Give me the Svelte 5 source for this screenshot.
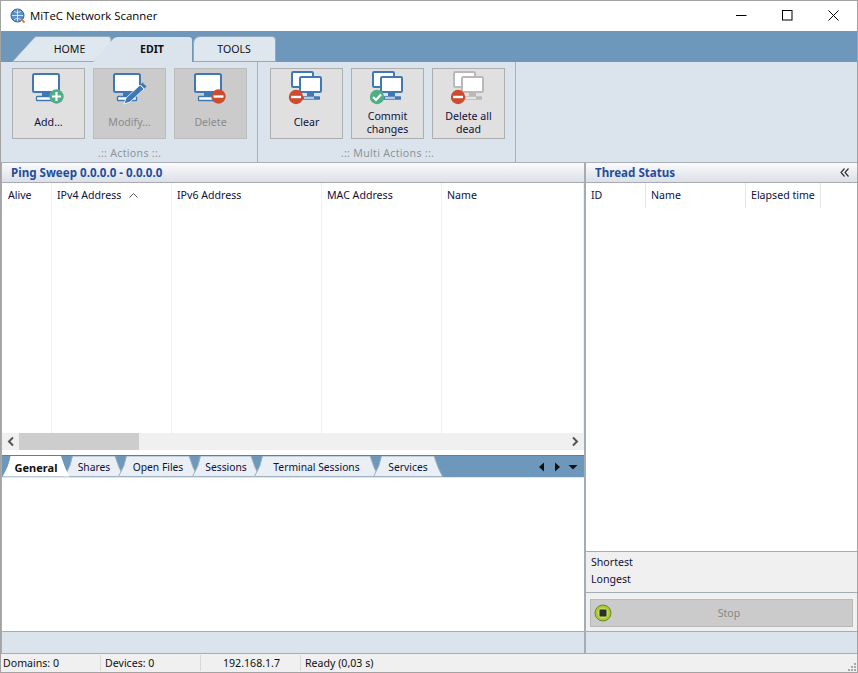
<script>
  const smallTabs = [
    { name: 'General', w: 68, active: true },
    { name: 'Shares', w: 60 },
    { name: 'Open Files', w: 80 },
    { name: 'Sessions', w: 68 },
    { name: 'Terminal Sessions', w: 125 },
    { name: 'Services', w: 70 }
  ];
  const leftCols = [['Alive', 50], ['IPv4 Address', 120], ['IPv6 Address', 150], ['MAC Address', 120], ['Name', 142]];
  const rightCols = [['ID', 60], ['Name', 100], ['Elapsed time', 75]];
</script>

{#snippet monitor(x, y, c = '#3f78b5')}
  <rect x={x + 1} y={y + 1} width="26" height="18" rx="1.5" fill="#fff" stroke={c} stroke-width="2" />
  <rect x={x + 10} y={y + 20} width="8" height="3" fill={c} />
  <rect x={x + 4.5} y={y + 23.5} width="19" height="4" rx="0.8" fill="#fff" stroke={c} stroke-width="1.4" />
{/snippet}

{#snippet smallMonitor(x, y, c = '#3f78b5')}
  <rect x={x + 1} y={y + 1} width="21" height="15" rx="1.2" fill="#fff" stroke={c} stroke-width="2" />
  <rect x={x + 8} y={y + 17} width="7" height="3" fill={c} />
  <rect x={x + 3} y={y + 20.2} width="18" height="3.6" rx="0.6" fill={c} />
  <rect x={x + 5} y={y + 21.4} width="10" height="1.2" fill="#fff" />
{/snippet}

{#snippet badge(kind, cx, cy)}
  <circle {cx} {cy} r="7.2" fill={kind === 'del' ? '#cf4b30' : '#4fae84'} />
  {#if kind === 'del'}
    <rect x={cx - 5} y={cy - 1.2} width="10" height="2.4" fill="#fff" />
  {:else if kind === 'add'}
    <path d="M{cx - 4.5} {cy}h9M{cx} {cy - 4.5}v9" stroke="#fff" stroke-width="2.2" />
  {:else}
    <path d="M{cx - 4} {cy}l3 3l5-5.5" stroke="#fff" stroke-width="2.2" fill="none" />
  {/if}
{/snippet}

{#snippet single(kind)}
  <svg class="ico" width="40" height="34" viewBox="0 0 40 34">
    {@render monitor(3, 2)}
    {#if kind === 'edit'}
      <path d="M14 33l2-6L30 14l4 4L20 31z" fill="#3f78b5" stroke="#fff" stroke-width="0.8" />
      <path d="M30.500 13.500l2-2 4 4-2 2z" fill="#3f78b5" />
    {:else}
      {@render badge(kind, 27.500, 25.500)}
    {/if}
  </svg>
{/snippet}

{#snippet multi(kind, c = '#3f78b5')}
  <svg class="ico" width="40" height="34" viewBox="0 0 40 34">
    <rect x="5" y="1" width="21" height="15" rx="1.2" fill="#fff" stroke={c} stroke-width="2" />
    {@render smallMonitor(12, 5, c)}
    {@render badge(kind, 9, 26)}
  </svg>
{/snippet}

<div class="win">
  <header class="title">
    <svg class="appicon" width="16" height="16" viewBox="0 0 16 16">
      <circle cx="7.500" cy="7.500" r="6.500" fill="#5d8fc7" stroke="#3c5f8f" />
      <path d="M2 7.500h11M7.500 1.500v12M4 3c2 2 5 2 7 0M4 12c2-2 5-2 7 0" stroke="#dfeaf6" stroke-width="0.9" fill="none" />
      <path d="M11 11l3.500 3.500" stroke="#d9822b" stroke-width="2" />
    </svg>
    <span class="apptitle">MiTeC Network Scanner</span>
    <div class="winbtns">
      <svg width="11" height="11" viewBox="0 0 11 11"><path d="M0 5.500h10.500" stroke="#000" /></svg>
      <svg width="11" height="11" viewBox="0 0 11 11"><rect x="0.500" y="0.500" width="9.500" height="9.500" fill="none" stroke="#000" /></svg>
      <svg width="11" height="11" viewBox="0 0 11 11"><path d="M0.500 0.500l10 10M10.500 0.500l-10 10" stroke="#000" /></svg>
    </div>
  </header>

  <nav class="tabbar">
    <div class="rtab home">
      <svg width="102" height="26" viewBox="0 0 102 26"><path d="M0.500 25.500L22 2Q23 0.500 25 0.500H96Q99 0.500 99 3V8L82 25.500Z" fill="#e0e8ef" stroke="#93a9bd" /></svg>
      <span>HOME</span>
    </div>
    <div class="rtab edit">
      <svg width="102" height="26" viewBox="0 0 102 26"><path d="M0 26L20 3Q22 1 25 1H96Q99 1 99 4V26Z" fill="#dbe4ec" /></svg>
      <span>EDIT</span>
    </div>
    <div class="rtab tools">
      <svg width="84" height="26" viewBox="0 0 84 26"><path d="M0.500 25.500V8Q0.500 0.500 8 0.500H79Q82.500 0.500 82.500 4V25.500Z" fill="#dfe7ee" stroke="#93a9bd" /></svg>
      <span>TOOLS</span>
    </div>
  </nav>

  <section class="ribbon">
    <div class="group g1">
      <div class="btns">
        <div class="rbtn">{@render single('add')}<span class="lbl">Add...</span></div>
        <div class="rbtn off">{@render single('edit')}<span class="lbl">Modify...</span></div>
        <div class="rbtn off">{@render single('del')}<span class="lbl">Delete</span></div>
      </div>
      <div class="gname">.:: Actions ::.</div>
    </div>
    <div class="group g2">
      <div class="btns">
        <div class="rbtn">{@render multi('del')}<span class="lbl">Clear</span></div>
        <div class="rbtn">{@render multi('ok')}<span class="lbl">Commit<br />changes</span></div>
        <div class="rbtn">{@render multi('del', '#b9b9b9')}<span class="lbl">Delete all<br />dead</span></div>
      </div>
      <div class="gname">.:: Multi Actions ::.</div>
    </div>
  </section>

  <main class="main">
    <div class="left">
      <div class="phead"><span>Ping Sweep 0.0.0.0 - 0.0.0.0</span></div>
      <div class="grid">
        <div class="cols">
          {#each leftCols as [n, w], i}
            <div class="col" style="width:{w}px">
              <span>{n}</span>
              {#if i === 1}
                <svg class="sort" width="9" height="5" viewBox="0 0 9 5"><path d="M0.500 4.500L4.500 0.500L8.500 4.500" fill="none" stroke="#555" /></svg>
              {/if}
            </div>
          {/each}
        </div>
      </div>
      <div class="hscroll">
        <svg width="17" height="17" viewBox="0 0 17 17"><path d="M11 4.500L7 8.500L11 12.500" fill="none" stroke="#555" stroke-width="2" /></svg>
        <div class="track"><div class="thumb"></div></div>
        <svg width="17" height="17" viewBox="0 0 17 17"><path d="M6 4.500L10 8.500L6 12.500" fill="none" stroke="#555" stroke-width="2" /></svg>
      </div>
      <div class="gap"></div>
      <div class="tabs2">
        {#each smallTabs as t, i}
          <div class="stab" class:active={t.active} style="width:{t.w}px">
            <svg width={t.w} height="21" viewBox="0 0 {t.w} 21">
              <path d="M0.500 20.500 Q7 10 8.500 0 H{t.w - 9} Q{t.w - 5} 13 {t.w - 0.500} 20.500 Z" fill={t.active ? '#fff' : '#e9eff5'} stroke={t.active ? 'none' : '#9fb3c6'} />
            </svg>
            <span>{t.name}</span>
          </div>
        {/each}
        <div class="navs">
          <svg width="8" height="10" viewBox="0 0 8 10"><path d="M6 0.500V9.500L1 5Z" fill="#111" /></svg>
          <svg width="8" height="10" viewBox="0 0 8 10"><path d="M2 0.500V9.500L7 5Z" fill="#111" /></svg>
          <svg width="10" height="10" viewBox="0 0 10 10"><path d="M0.500 3H9.500L5 7.500Z" fill="#111" /></svg>
        </div>
      </div>
      <div class="pane"></div>
      <div class="strip"></div>
    </div>

    <div class="right">
      <div class="phead thead">
        <span>Thread Status</span>
        <svg width="10" height="9" viewBox="0 0 10 9"><path d="M4.500 0.500L1 4.500L4.500 8.500M8.500 0.500L5 4.500L8.500 8.500" fill="none" stroke="#333" stroke-width="1.200" /></svg>
      </div>
      <div class="rgrid">
        <div class="cols">
          {#each rightCols as [n, w]}
            <div class="col" style="width:{w}px"><span>{n}</span></div>
          {/each}
        </div>
      </div>
      <div class="stats">
        <div>Shortest</div>
        <div>Longest</div>
      </div>
      <div class="stopwrap">
        <div class="stop">
          <svg width="18" height="18" viewBox="0 0 18 18">
            <circle cx="9" cy="9" r="8" fill="#a6c83a" stroke="#6f8a1f" />
            <circle cx="9" cy="9" r="5.500" fill="#c3dc5a" />
            <rect x="5.500" y="5.500" width="7" height="7" rx="1" fill="#2e2e2e" />
          </svg>
          <span>Stop</span>
        </div>
      </div>
      <div class="strip"></div>
    </div>
  </main>

  <footer class="status">
    <div class="cell c1">Domains: 0</div>
    <div class="cell c2">Devices: 0</div>
    <div class="cell c3">192.168.1.7</div>
    <div class="cell c4">Ready (0,03 s)</div>
    <svg class="grip" width="10" height="10" viewBox="0 0 10 10" fill="#a8a8a8">
      <rect x="7" y="1" width="2" height="2" /><rect x="4" y="4" width="2" height="2" /><rect x="7" y="4" width="2" height="2" />
      <rect x="1" y="7" width="2" height="2" /><rect x="4" y="7" width="2" height="2" /><rect x="7" y="7" width="2" height="2" />
    </svg>
  </footer>
</div>

<style>
  :global(body) { margin: 0; background: #fff; }
  .win {
    width: 858px; height: 673px; box-sizing: border-box;
    border: 1px solid #a3a3a3; display: flex; flex-direction: column;
    font: 10.6px/13px "Noto Sans", "Open Sans", sans-serif; color: #10103a; overflow: hidden;
    background: #fff;
  }
  .title { height: 30px; flex: none; display: flex; align-items: center; position: relative; padding-left: 9px; color: #000; }
  .appicon { margin-right: 4px; margin-top: -1px; }
  .apptitle { font: 11.4px/16px "Open Sans", sans-serif; margin-top: -1px; }
  .winbtns { margin-left: auto; display: flex; gap: 35px; padding-right: 18px; margin-top: -2px; }

  .tabbar { height: 31px; flex: none; background: #6d98bb; display: flex; align-items: flex-end; padding-left: 11px; }
  .rtab { position: relative; height: 26px; color: #111; }
  .rtab svg { position: absolute; left: 0; top: 0; }
  .rtab span { position: relative; display: block; text-align: center; line-height: 26px; }
  .home { width: 81px; }
  .home span { margin-left: 23px; width: 69px; }
  .edit { width: 99px; }
  .edit span { font-weight: 700; width: 99px; padding-left: 19px; box-sizing: border-box; }
  .tools { width: 84px; margin-left: 1px; }
  .tools span { width: 82px; }

  .ribbon { height: 101px; flex: none; box-sizing: border-box; background: #dbe4ec; border-bottom: 1px solid #a6aeb6; display: flex; }
  .group { display: flex; flex-direction: column; box-sizing: border-box; border-right: 1px solid #a9b1b9; padding-top: 6px; }
  .g1 { width: 257px; padding-left: 11px; }
  .g2 { width: 258px; padding-left: 12px; }
  .btns { display: flex; gap: 8px; }
  .rbtn {
    width: 73px; height: 71px; box-sizing: border-box; border: 1px solid #aeaeae; background: #e0e0e0;
    display: flex; flex-direction: column; align-items: center; color: #10103a;
  }
  .rbtn.off { background: #cbcbcb; color: #8a8a8a; border-color: #bcbcbc; }
  .ico { margin-top: 2px; flex: none; }
  .lbl { flex: 1; display: flex; align-items: center; text-align: center; padding-top: 2px; line-height: 13px; }
  .gname { text-align: center; color: #8e949a; margin-top: 8px; margin-right: 10px; letter-spacing: 0.3px; }

  .main { flex: 1; min-height: 0; display: flex; border-left: 1px solid #a6acb4; }
  .left { width: 582px; flex: none; display: flex; flex-direction: column; }
  .right { flex: 1; display: flex; flex-direction: column; border-left: 2px solid #a6acb4; min-width: 0; }
  .phead {
    height: 20px; flex: none; box-sizing: border-box; display: flex; align-items: center; padding-left: 9px;
    background: linear-gradient(#fbfbfc, #dcdfe7); border-bottom: 1px solid #a6acb4;
    color: #1f4e9b; font-weight: 700; font-size: 11.6px;
  }
  .thead { justify-content: space-between; padding-right: 7px; }
  .grid { height: 250px; flex: none; }
  .rgrid { flex: 1; }
  .cols { display: flex; height: 100%; }
  .col { box-sizing: border-box; border-right: 1px solid #f0f0f0; padding: 6px 0 0 5px; display: flex; align-items: flex-start; }
  .grid .col:first-child { padding-left: 6px; }
  .rgrid .cols { height: 25px; }
  .rgrid .col { border-right-color: #e6e6e6; }
  .sort { margin: 4px 0 0 8px; }
  .hscroll { height: 17px; flex: none; background: #f0f0f0; display: flex; }
  .track { flex: 1; }
  .thumb { width: 120px; height: 100%; background: #cdcdcd; }
  .gap { height: 5px; flex: none; }
  .tabs2 { height: 22px; flex: none; box-sizing: border-box; background: #6d98bb; border-top: 1px solid #5d7f9b; display: flex; position: relative; }
  .stab { position: relative; height: 21px; margin-right: -6px; color: #10103a; text-align: center; line-height: 23px; font-size: 10.3px; }
  .stab svg { position: absolute; left: 0; top: 0; }
  .stab span { position: relative; }
  .stab.active { font-weight: 700; font-size: 11px; color: #111; z-index: 1; }
  .navs { margin-left: auto; display: flex; gap: 7px; align-items: center; padding-right: 6px; }
  .pane { flex: 1; background: #fff; border-top: 1px solid #dfe6ec; }
  .strip { height: 21px; flex: none; background: #dbe4ec; border-top: 1px solid #a6acb4; }
  .stats { height: 42px; flex: none; box-sizing: border-box; background: #f0f0f0; border-top: 1px solid #a6acb4; border-bottom: 1px solid #a6acb4; padding: 4px 0 0 5px; display: flex; flex-direction: column; gap: 4px; }
  .stopwrap { height: 38px; flex: none; box-sizing: border-box; background: #f0f0f0; padding: 6px 4px 0 4px; }
  .stop { height: 28px; box-sizing: border-box; background: #cbcbcb; border: 1px solid #b9b9b9; display: flex; align-items: center; padding-left: 3px; color: #888; }
  .stop span { flex: 1; text-align: center; padding-right: 6px; }
  .status { height: 19px; flex: none; box-sizing: border-box; background: #f0f0f0; border-top: 1px solid #a6acb4; display: flex; align-items: center; position: relative; color: #111; }
  .cell { box-sizing: border-box; height: 16px; line-height: 16px; padding-left: 2px; border-right: 1px solid #d8d8d8; }
  .c1 { width: 100px; }
  .c2 { width: 100px; padding-left: 4px; }
  .c3 { width: 100px; text-align: center; }
  .c4 { border: 0; padding-left: 4px; }
  .grip { position: absolute; right: 0; bottom: 0; }
</style>
